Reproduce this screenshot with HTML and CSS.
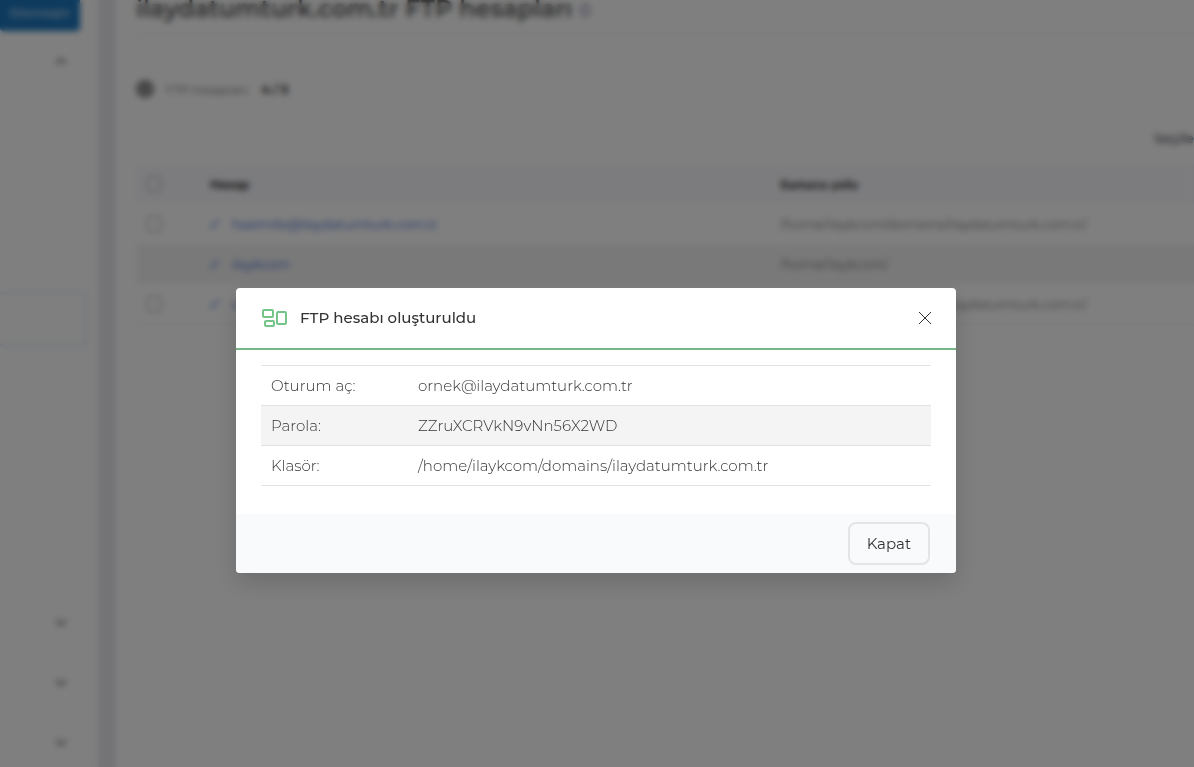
FILE: index.html
```
<!DOCTYPE html>
<html lang="tr">
<head>
  <meta charset="UTF-8">
  <meta name="viewport" content="width=device-width, initial-scale=1.0">
  <title>FTP hesapları</title>
  <link rel="stylesheet" href="styles.css">
</head>
<body>
  <div class="page">
    <aside class="sidebar">
      <button class="sidebar-action">Etkinleştir</button>
      <button class="menu-toggle" aria-expanded="true" aria-label="Menü 1">
        <svg width="12" height="8" viewBox="0 0 12 8"><path d="M1 7l5-5 5 5"/></svg>
      </button>
      <div class="submenu">
        <a href="#" class="submenu-active" aria-label="FTP hesapları"></a>
      </div>
      <button class="menu-toggle" aria-label="Menü 2">
        <svg width="12" height="8" viewBox="0 0 12 8"><path d="M1 1l5 5 5-5"/></svg>
      </button>
      <button class="menu-toggle" aria-label="Menü 3">
        <svg width="12" height="8" viewBox="0 0 12 8"><path d="M1 1l5 5 5-5"/></svg>
      </button>
      <button class="menu-toggle" aria-label="Menü 4">
        <svg width="12" height="8" viewBox="0 0 12 8"><path d="M1 1l5 5 5-5"/></svg>
      </button>
    </aside>
    <main class="content">
      <h1>ilaydatumturk.com.tr FTP hesapları
        <svg width="12" height="14" viewBox="0 0 12 14"><path d="M6 1l4 2v4c0 3-2 4-4 5-2-1-4-2-4-5V3z"/></svg>
      </h1>
      <div class="usage">
        <svg width="18" height="18" viewBox="0 0 18 18"><circle cx="9" cy="9" r="7"/><circle cx="9" cy="9" r="2"/></svg>
        <span>FTP hesapları:</span>
        <strong>4 / 5</strong>
      </div>
      <div class="toolbar"><button>Seçilenleri sil</button></div>
      <table class="accounts">
        <thead>
          <tr>
            <th class="col-check"><input type="checkbox" aria-label="Tümünü seç"></th>
            <th class="col-name">Hesap</th>
            <th>Sunucu yolu</th>
          </tr>
        </thead>
        <tbody>
          <tr>
            <td><input type="checkbox" aria-label="Hesabı seç"></td>
            <td><a href="#"><svg width="10" height="10" viewBox="0 0 10 10"><path d="M1 9l1-3 5-5 2 2-5 5z"/></svg>hasimile@ilaydatumturk.com.tr</a></td>
            <td>/home/ilaykcom/domains/ilaydatumturk.com.tr/</td>
          </tr>
          <tr>
            <td></td>
            <td><a href="#"><svg width="10" height="10" viewBox="0 0 10 10"><path d="M1 9l1-3 5-5 2 2-5 5z"/></svg>ilaykcom</a></td>
            <td>/home/ilaykcom/</td>
          </tr>
          <tr>
            <td><input type="checkbox" aria-label="Hesabı seç"></td>
            <td><a href="#"><svg width="10" height="10" viewBox="0 0 10 10"><path d="M1 9l1-3 5-5 2 2-5 5z"/></svg>ornek@ilaydatumturk.com.tr</a></td>
            <td>/home/ilaykcom/domains/ilaydatumturk.com.tr/</td>
          </tr>
        </tbody>
      </table>
    </main>
  </div>

  <div class="overlay">
    <div class="modal" role="dialog" aria-modal="true" aria-labelledby="modalTitle">
      <div class="modal-header">
        <svg class="modal-icon" width="26" height="20" viewBox="0 0 26 20">
          <rect x="1" y="2" width="10" height="7" rx="1"/>
          <rect x="3" y="13" width="9" height="5" rx="1"/>
          <rect x="15" y="4" width="9" height="12" rx="1"/>
        </svg>
        <h2 id="modalTitle">FTP hesabı oluşturuldu</h2>
        <button class="close" aria-label="Pencereyi kapat">
          <svg width="14" height="14" viewBox="0 0 14 14"><path d="M1 1l12 12M13 1L1 13"/></svg>
        </button>
      </div>
      <div class="modal-body">
        <table class="details">
          <tr>
            <th scope="row">Oturum aç:</th>
            <td>ornek@ilaydatumturk.com.tr</td>
          </tr>
          <tr>
            <th scope="row">Parola:</th>
            <td>ZZruXCRVkN9vNn56X2WD</td>
          </tr>
          <tr>
            <th scope="row">Klasör:</th>
            <td>/home/ilaykcom/domains/ilaydatumturk.com.tr</td>
          </tr>
        </table>
      </div>
      <div class="modal-footer">
        <button class="btn">Kapat</button>
      </div>
    </div>
  </div>
</body>
</html>
```
FILE: styles.css
```
* {
  box-sizing: border-box;
}
html, body {
  margin: 0;
  height: 100%;
  overflow: hidden;
  font-family: Montserrat, Inter, sans-serif;
  font-size: 13px;
  color: #444;
}
button {
  font-family: inherit;
  border: none;
  background: none;
  cursor: pointer;
}
svg {
  fill: none;
  stroke: currentColor;
}
.page {
  display: flex;
  min-height: 100vh;
  background-color: #e8e8ef;
}
.sidebar {
  width: 98px;
  flex-shrink: 0;
  padding-right: 11px;
  background-color: #fff;
}
.sidebar-action {
  display: block;
  width: 80px;
  height: 31px;
  padding: 0 10px 6px;
  border-radius: 0 0 4px 4px;
  background-color: #1c75bc;
  color: #fff;
  font-size: 12px;
  text-align: right;
}
.menu-toggle {
  display: flex;
  width: 100%;
  height: 60px;
  padding: 0 20px;
  align-items: center;
  justify-content: flex-end;
  color: #777;
}
.menu-toggle svg {
  stroke-width: 2;
}
.submenu {
  padding: 201px 0 247px;
}
.submenu-active {
  display: block;
  height: 54px;
  border: 2px solid #dde8f8;
  border-left: none;
}
.content {
  flex: 1;
  min-width: 0;
  margin-left: 18px;
  padding-left: 20px;
  background-color: #fff;
  overflow: hidden;
}
h1 {
  margin: 0;
  height: 34px;
  border-bottom: 1px solid #eee;
  font-size: 24px;
  line-height: 18px;
  font-weight: 600;
  white-space: nowrap;
  color: #555;
}
h1 svg {
  vertical-align: middle;
  color: #99b;
  stroke-width: 2;
}
.usage {
  display: flex;
  align-items: center;
  gap: 12px;
  padding-top: 46px;
}
.usage svg {
  stroke-width: 3;
  color: #555;
}
.usage span {
  font-size: 12px;
  color: #666;
}
.usage strong {
  font-size: 12px;
  color: #333;
}
.toolbar {
  display: flex;
  justify-content: flex-end;
  padding: 30px 0 16px;
}
.toolbar button {
  width: 40px;
  height: 20px;
  padding: 0;
  text-align: left;
  white-space: nowrap;
  font-weight: 500;
  color: #445;
}
.accounts {
  width: 100%;
  table-layout: fixed;
  border-collapse: collapse;
}
.accounts tr {
  height: 40px;
}
.accounts th,
.accounts td {
  padding: 0 10px;
  text-align: left;
}
.accounts td {
  font-weight: 300;
}
.accounts th {
  background-color: #f9f9fe;
  font-size: 12px;
  font-weight: 700;
  color: #333;
}
.accounts tbody tr:nth-child(even) {
  background-color: #f3f3f3;
}
.accounts tbody tr:last-child {
  border-bottom: 1px solid #eee;
}
.col-check {
  width: 64px;
}
.col-name {
  width: 570px;
}
.accounts input {
  appearance: none;
  display: block;
  width: 16px;
  height: 16px;
  margin: 0;
  border: 2px solid #ccccd6;
  border-radius: 4px;
}
.accounts a {
  display: flex;
  align-items: center;
  gap: 12px;
  font-weight: 400;
  color: #2f62d0;
  text-decoration: none;
}
.accounts a svg {
  stroke-width: 1;
}
.overlay {
  position: fixed;
  inset: 0;
  display: flex;
  align-items: flex-start;
  justify-content: center;
  padding: 288px 2px 0 0;
  background-color: rgba(0, 0, 0, 0.5);
  backdrop-filter: blur(3px);
}
.modal {
  width: 720px;
  max-width: 100%;
  border-radius: 4px;
  background-color: #fff;
  box-shadow: 0 10px 24px rgba(0, 0, 0, 0.15);
  overflow: hidden;
}
.modal-header {
  display: flex;
  align-items: center;
  height: 62px;
  padding: 0 24px 0 26px;
  border-bottom: 2px solid #75b787;
}
.modal-icon {
  color: #75c48a;
  stroke-width: 2;
}
.modal-header h2 {
  flex: 1;
  margin: 0 12px;
  font-size: 15px;
  line-height: 20px;
  font-weight: 500;
  color: #333;
}
.close {
  display: flex;
  padding: 0;
  color: #333;
}
.modal-body {
  padding: 15px 25px 28px;
}
.details {
  width: 100%;
  border-collapse: collapse;
  border-top: 1px solid #e3e3e3;
  font-size: 15px;
  color: #333;
}
.details tr {
  height: 40px;
  border-bottom: 1px solid #e3e3e3;
}
.details tr:nth-child(even) {
  background-color: #f4f4f4;
}
.details th,
.details td {
  padding: 0 10px;
  text-align: left;
  font-weight: 300;
}
.details th {
  width: 147px;
}
.modal-footer {
  display: flex;
  justify-content: flex-end;
  padding: 8px 26px;
  background-color: #f9fafc;
}
.btn {
  padding: 0 17px;
  border: 2px solid #e3e5e8;
  border-radius: 8px;
  font-size: 15px;
  line-height: 39px;
  color: #333;
}
```
